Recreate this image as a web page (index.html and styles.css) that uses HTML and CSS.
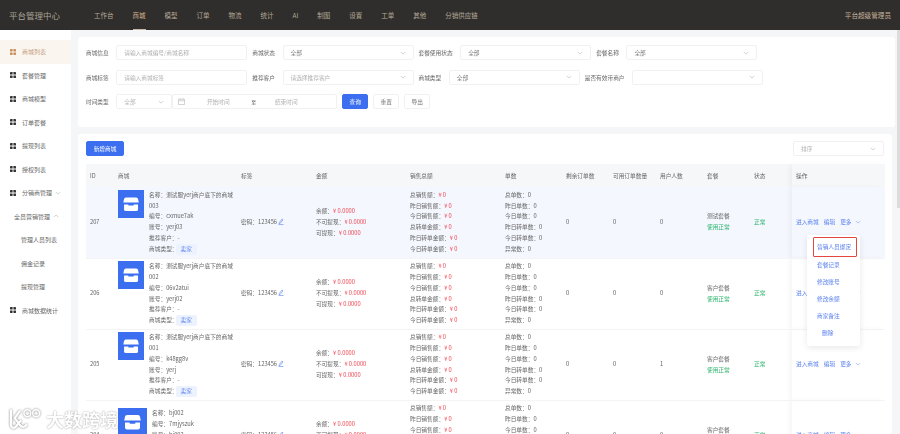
FILE: index.html
```html
<!DOCTYPE html>
<html lang="zh-CN">
<head>
  <meta charset="UTF-8">
  <meta name="viewport" content="width=device-width, initial-scale=1.0">
  <title>平台管理中心</title>
  <link rel="stylesheet" href="styles.css">
</head>
<body>
  <svg class="sprites" width="0" height="0">
    <symbol id="shop" viewBox="0 0 28 28">
      <path d="M8.5 7h11a2 2 0 0 1 2 1.700l.8 3.800H5.700l.8-3.800a2 2 0 0 1 2-1.700z" fill="#fff"/>
      <path d="M6.500 14.500h15v5a2 2 0 0 1-2 2h-11a2 2 0 0 1-2-2z" fill="#fff"/>
      <rect x="11" y="13.500" width="6" height="2.200" rx="1" fill="#3b6ff0"/>
    </symbol>
    <symbol id="grid" viewBox="0 0 6 6">
      <rect width="2.600" height="2.600" rx=".4"/><rect x="3.400" width="2.600" height="2.600" rx=".4"/>
      <rect y="3.400" width="2.600" height="2.600" rx=".4"/><rect x="3.400" y="3.400" width="2.600" height="2.600" rx=".4"/>
    </symbol>
    <symbol id="chev" viewBox="0 0 8 5">
      <path d="M1 1l3 3 3-3" fill="none" stroke="currentColor" stroke-width=".8"/>
    </symbol>
    <symbol id="pen" viewBox="0 0 6 7">
      <path d="M1.300 4.600l2.700-3.600 1 .8-2.700 3.500-1.200.3zM.5 6.500h5" fill="none" stroke="currentColor" stroke-width=".6"/>
    </symbol>
  </svg>

  <header class="topbar">
    <div class="brand">平台管理中心</div>
    <nav class="topnav">
      <a>工作台</a><a class="on">商城</a><a>模型</a><a>订单</a><a>物流</a><a>统计</a><a>AI</a><a>制图</a><a>设置</a><a>工单</a><a>其他</a><a>分销供应链</a>
    </nav>
    <div class="whoami">平台超级管理员</div>
  </header>

  <div class="main">
    <aside class="sidebar">
      <a class="side-item on"><svg class="ico"><use href="#grid"/></svg>商城列表</a>
      <a class="side-item"><svg class="ico"><use href="#grid"/></svg>套餐管理</a>
      <a class="side-item"><svg class="ico"><use href="#grid"/></svg>商城模型</a>
      <a class="side-item"><svg class="ico"><use href="#grid"/></svg>订单套餐</a>
      <a class="side-item"><svg class="ico"><use href="#grid"/></svg>提现列表</a>
      <a class="side-item"><svg class="ico"><use href="#grid"/></svg>授权列表</a>
      <a class="side-item"><svg class="ico"><use href="#grid"/></svg>分销商管理<svg class="chev"><use href="#chev"/></svg></a>
      <a class="side-item sub">全员营销管理<svg class="chev flip"><use href="#chev"/></svg></a>
      <a class="side-item sub2">管理人员列表</a>
      <a class="side-item sub2">佣金记录</a>
      <a class="side-item sub2">提现管理</a>
      <a class="side-item"><svg class="ico"><use href="#grid"/></svg>商城数据统计</a>
    </aside>

    <main class="content">
      <section class="card filters">
        <div class="f-row">
          <label>商城信息</label><div class="field w131 ph">请输入商城编号/商城名称</div>
          <label>商城状态</label><div class="field w131">全部<svg class="chev"><use href="#chev"/></svg></div>
          <label>套餐使用状态</label><div class="field w131">全部<svg class="chev"><use href="#chev"/></svg></div>
          <label>套餐名称</label><div class="field w131">全部<svg class="chev"><use href="#chev"/></svg></div>
        </div>
        <div class="f-row">
          <label>商城标签</label><div class="field w131 ph">请输入商城标签</div>
          <label>推荐客户</label><div class="field w131 ph">请选择推荐客户<svg class="chev"><use href="#chev"/></svg></div>
          <label>商城类型</label><div class="field w131">全部<svg class="chev"><use href="#chev"/></svg></div>
          <label>是否有效带商户</label><div class="field w131"><svg class="chev"><use href="#chev"/></svg></div>
        </div>
        <div class="f-row">
          <label>时间类型</label><div class="field w56 ph">全部<svg class="chev"><use href="#chev"/></svg></div>
          <div class="field date ph">
            <svg class="cal" viewBox="0 0 7 7"><path d="M.5 1.200h6v5.300h-6zM.5 2.800h6M2 .3v1.500M5 .3v1.500" fill="none" stroke="currentColor" stroke-width=".5"/></svg>
            <span class="from">开始时间</span><b>至</b><span class="to">结束时间</span>
          </div>
          <button class="btn primary">查询</button>
          <button class="btn">重置</button>
          <button class="btn">导出</button>
        </div>
      </section>

      <section class="card list">
        <div class="list-top">
          <button class="btn primary add">新增商城</button>
          <div class="field sort ph">排序<svg class="chev"><use href="#chev"/></svg></div>
        </div>
        <table class="table">
          <colgroup>
            <col class="c-id"><col class="c-shop"><col class="c-tag"><col class="c-money"><col class="c-sale"><col class="c-num">
            <col class="c-n"><col class="c-n"><col class="c-n"><col class="c-n"><col class="c-st"><col class="c-op">
          </colgroup>
          <thead>
            <tr><th>ID</th><th>商城</th><th>标签</th><th>金额</th><th>销售总额</th><th>单数</th><th>剩余订单数</th><th>可用订单数量</th><th>用户人数</th><th>套餐</th><th>状态</th><th class="fixed">操作</th></tr>
          </thead>
          <tbody id="rows"></tbody>
        </table>
        <div class="menu">
          <a class="picked">营销人员绑定</a>
          <a>套餐记录</a>
          <a>修改账号</a>
          <a>修改余额</a>
          <a>商家备注</a>
          <a class="del">删除</a>
        </div>
      </section>
    </main>
    <div class="scrollbar"></div>
  </div>

  <div class="mark">
    <svg class="mark-logo" viewBox="0 0 34 24">
      <path d="M3 3v15c0 3 3 4 5 2l5-6M12 4L7 11l6 8c2 2 5 1 6-1" fill="none" stroke="#fff" stroke-width="2.200" stroke-linecap="round"/>
      <circle cx="20" cy="6" r="3.600" fill="none" stroke="#fff" stroke-width="1.500"/>
      <circle cx="29" cy="6" r="3.600" fill="none" stroke="#fff" stroke-width="1.500"/>
    </svg>
    <span>大数跨境</span>
  </div>

  <script>
    const shops = [
      { id: 207, name: "测试服yerj商户底下的商域003", code: "cxmue7ak", acct: "yerj03", combo: "测试套餐", users: 0, active: true },
      { id: 206, name: "测试服yerj商户底下的商域002", code: "06v2atui", acct: "yerj02", combo: "客户套餐", users: 0 },
      { id: 205, name: "测试服yerj商户底下的商域001", code: "k48gg8v", acct: "yerj", combo: "客户套餐", users: 1 },
      { id: 204, name: "bj002", code: "7mjyszuk", acct: "bj002", combo: "客户套餐", users: 0 }
    ];

    const money = (label, value) => `<div>${label}：<em>¥ ${value}</em></div>`;
    const plain = (label, value) => `<div>${label}：${value}</div>`;

    document.getElementById("rows").innerHTML = shops.map(s => `
      <tr class="${s.active ? "active" : ""}">
        <td>${s.id}</td>
        <td>
          <div class="shop">
            <svg class="shop-ico"><use href="#shop"/></svg>
            <div class="shop-info">
              <div>名称：${s.name}</div>
              <div>编号：${s.code}</div>
              <div>账号：${s.acct}</div>
              <div>推荐客户：-</div>
              <div>商城类型：<span class="tag">卖家</span></div>
            </div>
          </div>
        </td>
        <td>密码：123456<svg class="pen"><use href="#pen"/></svg></td>
        <td>${money("余额", "0.0000")}${money("不可提现", "0.0000")}${money("可提现", "0.0000")}</td>
        <td>${money("总销售额", "0")}${money("昨日销售额", "0")}${money("今日销售额", "0")}${money("总转单金额", "0")}${money("昨日转单金额", "0")}${money("今日转单金额", "0")}</td>
        <td>${plain("总单数", 0)}${plain("昨日单数", 0)}${plain("今日单数", 0)}${plain("昨日转单数", 0)}${plain("今日转单数", 0)}${plain("异常数", 0)}</td>
        <td>0</td>
        <td>0</td>
        <td>${s.users}</td>
        <td>${s.combo}<div class="ok">使用正常</div></td>
        <td class="ok">正常</td>
        <td class="fixed"><div class="ops"><a>进入商城</a><a>编辑</a><a>更多<svg class="chev"><use href="#chev"/></svg></a></div></td>
      </tr>`).join("");
  </script>
</body>
</html>
```

FILE: styles.css
```css
* {
  box-sizing: border-box;
}

html, body {
  margin: 0;
  height: 434px;
  overflow: hidden;
}

body {
  font-family: "Noto Sans CJK SC", "Liberation Sans", sans-serif;
  font-size: 5.7px;
  color: #666;
  background: #f5f6f7;
  filter: blur(0.5px);
}

.sprites {
  position: absolute;
}

.topbar {
  display: flex;
  align-items: center;
  height: 30px;
  padding: 0 9px;
  background: #2f2e2c;
  color: #b5a998;
}

.brand {
  width: 85px;
  font-size: 8.5px;
  color: #a9a296;
}

.topnav {
  display: flex;
  gap: 19px;
  flex: 1;
  font-size: 6.5px;
  height: 30px;
}

.topnav a {
  display: flex;
  align-items: center;
  height: 30px;
  justify-content: center;
  border-bottom: 1px solid transparent;
}

.topnav a.on {
  color: #d9b28f;
  border-bottom-color: #c9b9a6;
}

.whoami {
  font-size: 6.600px;
  color: #c4b199;
}

.main {
  display: flex;
  height: 404px;
}

.sidebar {
  width: 71px;
  padding-top: 10px;
  background: #fff;
  flex: none;
}

.side-item {
  display: flex;
  align-items: center;
  height: 23.500px;
  padding-left: 10px;
  color: #666;
  font-size: 6px;
}

.side-item.on {
  color: #c49a7a;
  background: #fbf5f0;
}

.side-item.sub {
  padding-left: 14px;
}

.side-item.sub2 {
  padding-left: 21px;
}

.ico {
  width: 6px;
  height: 6px;
  margin-right: 6px;
  fill: #333;
}

.on .ico {
  fill: #c98f5c;
}

.chev {
  width: 6px;
  height: 4px;
  margin-left: auto;
  color: #b5b5b5;
  flex: none;
}

.side-item .chev {
  margin-left: 3px;
}

.flip {
  transform: rotate(180deg);
}

.content {
  flex: 1;
  padding: 7px 1px 0 7px;
  min-width: 0;
}

.card {
  background: #fff;
  border-radius: 3px;
}

.filters {
  height: 90px;
  padding: 8px;
  display: flex;
  flex-direction: column;
  gap: 9.500px;
}

.f-row {
  display: flex;
  align-items: center;
  height: 15px;
}

.f-row label {
  margin-right: 7.500px;
  margin-left: 5px;
  color: #666;
}

.f-row label:first-child {
  margin-left: 0;
}

.field {
  display: flex;
  align-items: center;
  height: 15px;
  padding: 0 7px;
  border: 1px solid #f1f1f3;
  border-radius: 2px;
  color: #777;
  background: #fff;
}

.field.ph {
  color: #b0b0b0;
}

.w131 {
  width: 131px;
}

.w56 {
  width: 56px;
}

.date {
  width: 165px;
  padding: 0 23px 0 5px;
}

.date .from {
  flex: 0 0 66px;
  text-align: center;
}

.date .to {
  flex: 0 0 60px;
  text-align: center;
}

.date b {
  font-weight: normal;
  color: #555;
  font-size: 5px;
}

.cal {
  width: 7px;
  height: 7px;
  flex: none;
  color: #aaa;
}

.btn {
  height: 15px;
  padding: 0;
  width: 26px;
  margin-left: 5px;
  border: 1px solid #f1f1f3;
  border-radius: 2px;
  background: #fff;
  color: #777;
  font: inherit;
}

.btn.primary {
  background: #3b6ff0;
  border-color: #3b6ff0;
  color: #fff;
}

.list {
  position: relative;
  height: 300px;
  margin: 7px 3px 0 0;
  padding: 7px 8px 0;
  overflow: hidden;
}

.list-top {
  display: flex;
  justify-content: space-between;
  height: 23px;
}

.btn.add {
  width: 38px;
  margin-left: 0;
}

.sort {
  width: 91px;
  height: 15px;
}

.table {
  width: 799px;
  border-collapse: collapse;
  table-layout: fixed;
}

.c-id { width: 28px; }
.c-shop { width: 123px; }
.c-tag { width: 75px; }
.c-money { width: 94px; }
.c-sale { width: 95px; }
.c-num { width: 61px; }
.c-n { width: 47px; }
.c-st { width: 42px; }
.c-op { width: 93px; }

.table th {
  height: 23px;
  padding: 0 4px;
  text-align: left;
  font-weight: normal;
  color: #666;
  background: #f6f7f9;
}

.table td {
  height: 71px;
  padding: 0 4px;
  border-bottom: 1px solid #f3f4f6;
  line-height: 10.850px;
}

.table .active td {
  background: #f4f7fe;
}

.table .fixed {
  box-shadow: -3px 0 4px rgba(0, 0, 0, 0.035);
}

.shop {
  display: flex;
  align-items: flex-start;
  gap: 5px;
}

.shop-ico {
  flex: 0 1 29px;
  height: 28px;
  background: #3b6ff0;
}

.shop-info {
  flex: 0 1 auto;
  min-width: 0;
}

.tag {
  display: inline-block;
  padding: 0 5px;
  margin-left: -2px;
  line-height: 10.850px;
  height: 10.850px;
  vertical-align: top;
  border-radius: 2px;
  background: #edf3fe;
  color: #5b82ee;
}

.table em {
  font-style: normal;
  color: #ef4a55;
}

.pen {
  width: 6px;
  height: 7px;
  margin-left: 1px;
  color: #5b82ee;
  vertical-align: -1px;
}

.ok {
  color: #2fb56e;
}

.ops {
  display: flex;
  gap: 5px;
  color: #5b82ee;
}

.ops .chev {
  margin-left: 3px;
  color: #8aa5f0;
}

.menu {
  position: absolute;
  top: 101px;
  left: 729px;
  width: 53px;
  height: 111px;
  padding-top: 2px;
  display: flex;
  flex-direction: column;
  background: #fff;
  border-radius: 2px;
  box-shadow: 0 2px 6px rgba(0, 0, 0, 0.09);
  color: #5b82ee;
}

.menu a {
  height: 17px;
  line-height: 17px;
  padding-left: 10px;
}

.menu .picked {
  height: 20px;
  line-height: 17.500px;
  padding-left: 3px;
  margin: 0 3px -1.500px 6px;
  border: 1.300px solid #e2483d;
  border-radius: 1px;
}

.menu .del {
  padding-left: 15px;
}

.scrollbar {
  width: 4px;
  flex: none;
  background: linear-gradient(90deg, #f5f6f7 1px, #dcdcdc 1px, #dcdcdc 100%) 0 0 / 100% 178px no-repeat;
}

.mark {
  position: absolute;
  left: 8px;
  top: 407px;
  display: flex;
  align-items: center;
  gap: 5px;
  color: #fff;
  font-size: 18px;
  font-weight: 700;
  line-height: 24px;
  text-shadow: 0 0 1.500px rgba(90, 90, 90, 0.7);
}

.mark-logo {
  width: 33px;
  height: 24px;
  filter: drop-shadow(0 0 0.8px rgba(90, 90, 90, 0.8));
}
```
